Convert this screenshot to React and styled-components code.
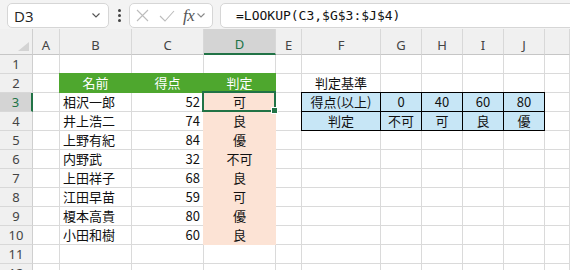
import React from "react";
import styled, { createGlobalStyle, css } from "styled-components";

const GRID = "#dadada";
const GREEN = "#217346";
const HEAD_BG = "#f0f0f0";
const PEACH = "#fce3d5";
const LEAF = "#4ea72e";
const SKY = "#c7e6f6";

const GlobalStyle = createGlobalStyle`
  body { margin: 0; background: #fff; overflow: hidden; }
`;

const Window = styled.div`
  width: 570px;
  height: 270px;
  overflow: hidden;
  background: #fff;
  font-family: "Noto Sans CJK JP", sans-serif;
`;

const Toolbar = styled.div`
  height: 29px;
  box-sizing: border-box;
  display: flex;
  align-items: flex-start;
  padding: 3px 0 0 7px;
  background: #f3f3f3;
`;

const Box = styled.div`
  height: 25px;
  box-sizing: border-box;
  background: #fff;
  border: 1px solid #d6d6d6;
  border-radius: 5px;
  display: flex;
  align-items: center;
`;

const NameBox = styled(Box)`
  width: 102px;
  padding: 0 8px 0 6px;
  justify-content: space-between;
  font: 15px "Open Sans", sans-serif;
  color: #222;
`;

const Dots = styled.div`
  width: 20px;
  height: 25px;
  display: flex;
  flex-direction: column;
  align-items: center;
  justify-content: center;
  gap: 2px;
  span {
    width: 3px;
    height: 3px;
    border-radius: 50%;
    background: #444;
  }
`;

const FuncBox = styled(Box)`
  width: 84px;
  padding-left: 6px;
  gap: 0;
`;

const Fx = styled.span`
  font: italic 17px "Liberation Serif", serif;
  color: #555;
  margin: 0 3px 0 8px;
  letter-spacing: -0.5px;
`;

const FormulaBox = styled(Box)`
  flex: 1;
  margin: 0 -10px 0 7px;
  padding-left: 15px;
  font: 13px "DejaVu Sans Mono", monospace;
  color: #111;
`;

const Sheet = styled.div`
  display: grid;
  grid-template-columns: 33px 27px 72px 72px 72px 26px 79px 41px 41px 41px 41px 1fr;
  grid-template-rows: 26px;
  grid-auto-rows: 19px;
`;

const Corner = styled.div`
  position: relative;
  background: ${HEAD_BG};
  border-right: 1px solid #cfcfcf;
  border-bottom: 1px solid #c6c6c6;
  &::after {
    content: "";
    position: absolute;
    right: 3px;
    bottom: 3px;
    width: 0;
    height: 0;
    border-left: 11px solid transparent;
    border-bottom: 9px solid #d3d3d3;
  }
`;

const ColHead = styled.div`
  box-sizing: border-box;
  background: ${(p) => (p.$active ? "#d4d4d4" : HEAD_BG)};
  border-right: 1px solid #d8d8d8;
  border-bottom: ${(p) => (p.$active ? `2px solid ${GREEN}` : "1px solid #c6c6c6")};
  color: ${(p) => (p.$active ? GREEN : "#444")};
  font: 13px "Noto Sans", sans-serif;
  display: flex;
  justify-content: center;
  align-items: center;
  padding-top: 6px;
`;

const RowHead = styled.div`
  box-sizing: border-box;
  background: ${(p) => (p.$active ? "#d4d4d4" : HEAD_BG)};
  border-right: ${(p) => (p.$active ? `2px solid ${GREEN}` : "1px solid #cfcfcf")};
  border-bottom: 1px solid #d8d8d8;
  color: ${(p) => (p.$active ? GREEN : "#444")};
  font: 13px "Noto Sans", sans-serif;
  display: flex;
  justify-content: center;
  align-items: center;
`;

const Cell = styled.div`
  box-sizing: border-box;
  border-right: 1px solid ${(p) => p.$fill || GRID};
  border-bottom: 1px solid ${(p) => p.$fill || GRID};
  background: ${(p) => p.$fill || "#fff"};
  color: ${(p) => p.$color || "#111"};
  font-size: 13px;
  line-height: 18px;
  white-space: nowrap;
  display: flex;
  align-items: center;
  padding: 0 3px;
  justify-content: ${(p) =>
    p.$align === "right" ? "flex-end" : p.$align === "center" ? "center" : "flex-start"};
  ${(p) =>
    p.$fill &&
    !p.$boxed &&
    css`
      box-shadow: -1px -1px 0 ${p.$fill}, -1px 0 0 ${p.$fill}, 0 -1px 0 ${p.$fill};
    `}
  ${(p) =>
    p.$boxed &&
    css`
      border-right-color: #000;
      border-bottom-color: #000;
      box-shadow: ${[
        p.$first && "-1px 0 0 #000",
        p.$top && "0 -1px 0 #000",
        p.$first && p.$top && "-1px -1px 0 #000",
      ]
        .filter(Boolean)
        .join(", ") || "none"};
    `}
  ${(p) =>
    p.$selected &&
    css`
      position: relative;
    `}
`;

const Selection = styled.div`
  position: absolute;
  left: -2px;
  top: -2px;
  right: -1px;
  bottom: -1px;
  border: 2px solid ${GREEN};
  z-index: 2;
  &::after {
    content: "";
    position: absolute;
    right: -4px;
    bottom: -4px;
    width: 5px;
    height: 5px;
    background: ${GREEN};
    border: 1px solid #fff;
  }
`;

const Chevron = ({ color = "#555", w = 8 }) => (
  <svg width={w} height="5" viewBox="0 0 8 5">
    <path d="M0.5 0.5 L4 4 L7.5 0.5" fill="none" stroke={color} strokeWidth="1.1" />
  </svg>
);

const COLS = ["A", "B", "C", "D", "E", "F", "G", "H", "I", "J", ""];

const students = [
  ["相沢一郎", 52, "可"],
  ["井上浩二", 74, "良"],
  ["上野有紀", 84, "優"],
  ["内野武", 32, "不可"],
  ["上田祥子", 68, "良"],
  ["江田早苗", 59, "可"],
  ["榎本高貴", 80, "優"],
  ["小田和樹", 60, "良"],
];

const criteria = [
  ["得点(以上)", "0", "40", "60", "80"],
  ["判定", "不可", "可", "良", "優"],
];

function cellFor(row, col) {
  // returns props + text for a given cell
  if (row === 2 && col >= 1 && col <= 3) {
    return { text: ["名前", "得点", "判定"][col - 1], $fill: LEAF, $color: "#fff", $align: "center" };
  }
  if (row >= 3 && row <= 10) {
    const s = students[row - 3];
    if (col === 1) return { text: s[0] };
    if (col === 2) return { text: s[1], $align: "right" };
    if (col === 3) return { text: s[2], $fill: PEACH, $align: "center", $selected: row === 3 };
  }
  if (row === 2 && col === 5) return { text: "判定基準", $align: "center" };
  if ((row === 3 || row === 4) && col >= 5 && col <= 9) {
    return {
      text: criteria[row - 3][col - 5],
      $fill: SKY,
      $boxed: true,
      $align: "center",
      $first: col === 5,
      $top: row === 3,
    };
  }
  return { text: "" };
}

export default function App() {
  const rows = Array.from({ length: 12 }, (_, i) => i + 1);
  return (
    <Window>
      <GlobalStyle />
      <Toolbar>
        <NameBox>
          <span>D3</span>
          <Chevron />
        </NameBox>
        <Dots>
          <span />
          <span />
          <span />
        </Dots>
        <FuncBox>
          <svg width="13" height="13" viewBox="0 0 13 13">
            <path d="M1 1 L12 12 M12 1 L1 12" stroke="#bcbcbc" strokeWidth="1.1" fill="none" />
          </svg>
          <svg width="16" height="12" viewBox="0 0 16 12" style={{ marginLeft: 10 }}>
            <path d="M1 6 L6 11 L15 1" stroke="#bcbcbc" strokeWidth="1.1" fill="none" />
          </svg>
          <Fx>fx</Fx>
          <Chevron color="#888" />
        </FuncBox>
        <FormulaBox>=LOOKUP(C3,$G$3:$J$4)</FormulaBox>
      </Toolbar>
      <Sheet>
        <Corner />
        {COLS.map((c, i) => (
          <ColHead key={i} $active={c === "D"}>
            {c}
          </ColHead>
        ))}
        {rows.map((r) => (
          <React.Fragment key={r}>
            <RowHead $active={r === 3}>{r}</RowHead>
            {COLS.map((c, ci) => {
              const { text, ...props } = cellFor(r, ci);
              return (
                <Cell key={ci} {...props}>
                  {text}
                  {props.$selected && <Selection />}
                </Cell>
              );
            })}
          </React.Fragment>
        ))}
      </Sheet>
    </Window>
  );
}
